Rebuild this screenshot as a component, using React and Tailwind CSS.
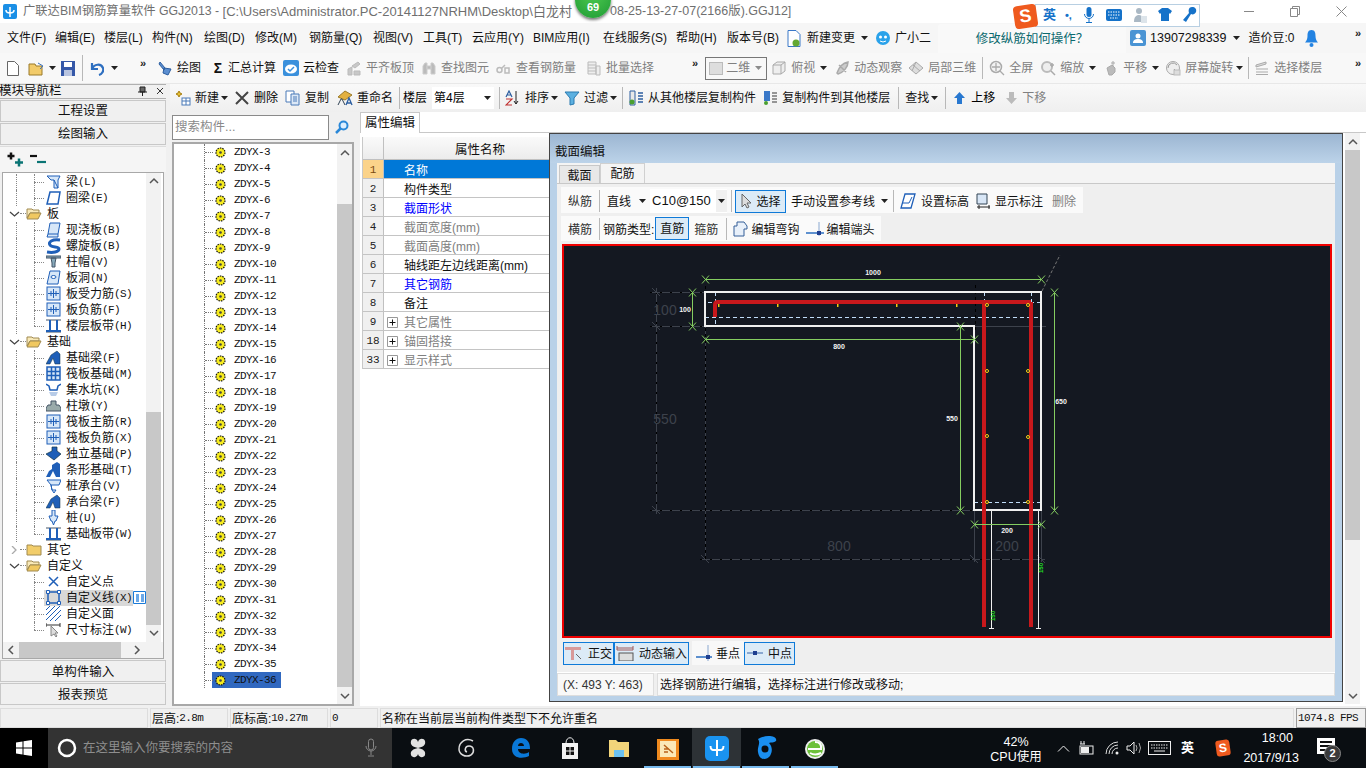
const sans = "[font-family:'Liberation_Sans','Noto_Sans_CJK_SC',sans-serif]";
const mono = "text-[11px] tracking-[-0.6px] [font-family:'Liberation_Mono',monospace]";

const Svg = ({ w = 16, h = 16, children, className = "" }) => (
  <svg width={w} height={h} viewBox={`0 0 ${w} ${h}`} className={`shrink-0 ${className}`}>
    {children}
  </svg>
);

const Caret = ({ className = "" }) => (
  <svg width="7" height="4" viewBox="0 0 7 4" className={`shrink-0 ${className}`}>
    <path d="M0 0h7L3.500 4z" fill="#222" />
  </svg>
);

const Sep = ({ h = "h-[22px]", className = "" }) => <div className={`w-px ${h} bg-[#b8b8b8] shrink-0 ${className}`} />;

const More = ({ className = "" }) => (
  <span className={`text-[11px] font-bold leading-none text-[#222] ${className}`}>»</span>
);

// toolbar icons, all gray ones share one look
const GrayIcon = ({ kind }) => (
  <Svg>
    {kind === "cube" && <path d="M2 5l4-3h8v9l-4 3H2zM2 5h8v9M10 5l4-3" fill="#eee" stroke="#aaa" />}
    {kind === "orbit" && <path d="M3 13C5 7 9 3 14 2c0 5-4 10-10 12zM5 5l7 7" fill="#ccc" stroke="#aaa" strokeWidth="1.500" />}
    {kind === "local" && <path d="M1 8l7-6 7 6-7 6zM5 5l7 6M8 2l-4 9" fill="#ddd" stroke="#aaa" />}
    {kind === "zoomall" && <><circle cx="7" cy="7" r="5.500" fill="#f2f2f2" stroke="#aaa" strokeWidth="1.500" /><path d="M7 3v8M3 7h8M11 11l4 4" stroke="#aaa" strokeWidth="1.300" /></>}
    {kind === "zoom" && <><circle cx="7" cy="7" r="5" fill="#eee" stroke="#bbb" strokeWidth="2" /><path d="M11 11l4 4M12 3v4M10 5h4" stroke="#aaa" strokeWidth="1.500" /></>}
    {kind === "pan" && <path d="M4 8l5-3 3 3v4l-3 3H6zM10 1v5M8 3h4" fill="#bbb" stroke="#aaa" />}
    {kind === "rotate" && <><circle cx="8" cy="8" r="6.500" fill="#eee" stroke="#aaa" /><path d="M3 8a5 5 0 0 1 9-3M9 9l3 3" stroke="#999" fill="none" /><rect x="9" y="10" width="6" height="5" fill="#ddd" stroke="#bbb" /></>}
    {kind === "floors" && <path d="M2 5l10-3v2L2 7zM2 9h12M2 12h12M2 14.500h12" fill="#ddd" stroke="#aaa" />}
    {kind === "flat" && <path d="M2 15V9l4-2v8zM6 6l6-4 2 2-5 4zM8 15v-4h6v4z" fill="#c8c8c8" stroke="#bbb" />}
    {kind === "binoc" && <path d="M2 14V6l2-3h2v11zM10 14V3h2l2 3v8zM6 6h4v3H6z" fill="#bbb" stroke="#ccc" />}
    {kind === "link" && <path d="M1 10a2.500 2.500 0 0 1 5 0 2.500 2.500 0 0 1-5 0zM9 8h4v5H9zM6 8l3-3" fill="none" stroke="#bbb" strokeWidth="1.500" />}
    {kind === "batch" && <path d="M2 2h8v12H2zM2 5h8M2 8h8M2 11h8M10 6h4v9h-4z" fill="#eee" stroke="#bbb" />}
  </Svg>
);

const Tool = ({ icon, label, gray, caret, caretGap = "ml-[5px]", className = "" }) => (
  <div className={`flex items-center shrink-0 ${className}`}>
    {icon}
    <span className={`${icon ? "ml-[4px]" : ""} whitespace-nowrap ${gray ? "text-[#808080]" : "text-[#111]"}`}>{label}</span>
    {caret && <Caret className={caretGap} />}
  </div>
);

const menus = [
  ["文件(F)", "w-[48px]"],
  ["编辑(E)", "w-[49px]"],
  ["楼层(L)", "w-[48px]"],
  ["构件(N)", "w-[52px]"],
  ["绘图(D)", "w-[51px]"],
  ["修改(M)", "w-[54px]"],
  ["钢筋量(Q)", "w-[64px]"],
  ["视图(V)", "w-[50px]"],
  ["工具(T)", "w-[49px]"],
  ["云应用(Y)", "w-[61px]"],
  ["BIM应用(I)", "w-[70px]"],
  ["在线服务(S)", "w-[73px]"],
  ["帮助(H)", "w-[51px]"],
  ["版本号(B)", "w-[60px]"],
];

const TitleBar = () => (
  <div className="h-[23px] bg-white flex items-center relative shrink-0">
    <div className="ml-[3px] w-[14px] h-[15px] rounded-[2px] bg-[#1a8fe6] flex items-center justify-center">
      <Svg w={10} h={10}><path d="M5 0v10M1 3c0 3 2 3 4 3s4 0 4-3" stroke="#fff" strokeWidth="1.500" fill="none" /></Svg>
    </div>
    <span className="ml-[6px] text-[#6f6f6f] text-[12.300px] whitespace-nowrap">广联达BIM钢筋算量软件 GGJ2013 -&nbsp;</span>
    <span className="text-[#6f6f6f] text-[13px] whitespace-nowrap w-[360px] overflow-hidden">[C:\Users\Administrator.PC-20141127NRHM\Desktop\白龙村</span>
    <span className="absolute left-[610px] text-[#6f6f6f] text-[12.500px] whitespace-nowrap">08-25-13-27-07(2166版).GGJ12]</span>
    <div className="ml-auto flex items-center mr-[19px] gap-[36px]">
      <div className="w-[10px] h-px bg-[#888]" />
      <Svg w={10} h={11}><path d="M.5 2.500h7v8h-7zM2.500 2.500v-2h7v8h-2" fill="none" stroke="#888" /></Svg>
      <Svg w={11} h={11}><path d="M.5.5l10 10M10.500.5l-10 10" stroke="#888" /></Svg>
    </div>
    {/* floating score badge */}
    <div className="absolute left-[575px] top-[-18px] w-[36px] h-[36px] rounded-full bg-[radial-gradient(circle_at_50%_35%,#4cc94f,#1f9a35)] shadow-[0_2px_3px_#7a7a7a] flex items-end justify-center pb-[3px] text-white text-[11px] font-bold">69</div>
  </div>
);

const SogouBar = () => (
  <div className="absolute left-[1014px] top-[3px] h-[24px] w-[186px] flex items-center">
    <div className="w-[23px] h-[23px] rounded-[4px] bg-[#ef5a1e] rotate-[-8deg] flex items-center justify-center text-white font-bold text-[18px] z-10 mt-[2px]">S</div>
    <div className="flex-1 h-[23px] -ml-[2px] bg-white border border-[#b8cfe2] flex items-center pl-[7px] gap-[11px] text-[#1572c9]">
      <span className="font-bold text-[13px]">英</span>
      <span className="font-bold text-[11px] -ml-[2px]">•,</span>
      <Svg w={12} h={18}><path d="M6 1a2.500 2.500 0 0 1 2.500 2.500v5a2.500 2.500 0 0 1-5 0v-5A2.500 2.500 0 0 1 6 1z" fill="#1572c9" /><path d="M1.500 8a4.500 4.500 0 0 0 9 0M6 13v3M3 16.500h6" stroke="#1572c9" fill="none" /></Svg>
      <Svg w={16} h={12}><rect width="16" height="12" rx="2" fill="#1572c9" /><path d="M2 3h12M2 6h12M4 9h8" stroke="#fff" strokeDasharray="1.500 1" /></Svg>
      <Svg w={14} h={16}><circle cx="6" cy="4" r="3" fill="#aab8c4" /><path d="M1 15c0-5 2-7 5-7 2 0 3 1 3 2v5z" fill="#aab8c4" /><rect x="8" y="9" width="6" height="7" fill="#dce4ea" /></Svg>
      <Svg w={14} h={14}><path d="M4 0h6l4 3-2 3-1-1v8H3V5L2 6 0 3z" fill="#1572c9" /></Svg>
      <Svg w={14} h={16}><path d="M9 0c3 0 5 2 4 5-1 2-3 3-5 2l-5 8-3-2 6-7C5 3 6 0 9 0z" fill="#1572c9" /></Svg>
    </div>
  </div>
);

const MenuBar = () => (
  <div className="h-[30px] bg-[#f6f6f6] flex items-center shrink-0 text-[12px] text-[#111]">
    <div className="flex items-center pl-[7px]">
      {menus.map(([m, w]) => (
        <span key={m} className={`whitespace-nowrap ${w}`}>{m}</span>
      ))}
    </div>
    <div className="flex items-center">
      <Svg w={14} h={17}><path d="M1 .5h8l4 4v12H1z" fill="#fff" stroke="#3a78c8" /><circle cx="9" cy="13" r="3.500" fill="#63a832" /></Svg>
      <span className="ml-[6px]">新建变更</span>
      <Caret className="ml-[6px]" />
    </div>
    <div className="flex items-center ml-[7px]">
      <Svg w={16} h={16}><circle cx="8" cy="8" r="7" fill="#2aa2ea" /><circle cx="5.500" cy="7" r="1.500" fill="#fff" /><circle cx="10.500" cy="7" r="1.500" fill="#fff" /><path d="M5 11q3 2 6 0" stroke="#fff" fill="none" /></Svg>
      <span className="ml-[4px]">广小二</span>
    </div>
    <div className="ml-[7px] h-[30px] w-[188px] mt-[2px] bg-[#f9f9f9] rounded-t-[3px] flex items-center justify-center text-[#0d6a6f] text-[12.500px]">修改纵筋如何操作？</div>
    <div className="w-[16px] h-[16px] ml-[4px] rounded-[2px] bg-[#4a94d4] flex items-center justify-center">
      <Svg w={10} h={10}><circle cx="5" cy="3" r="2.500" fill="#fff" /><path d="M0 10c0-3 2-4 5-4s5 1 5 4z" fill="#fff" /></Svg>
    </div>
    <span className="ml-[4px] text-[12.500px]">13907298339</span>
    <Caret className="ml-[6px]" />
    <span className="ml-[9px] whitespace-nowrap">造价豆:0</span>
    <Svg w={13} h={17} className="ml-[10px]"><path d="M6.500 0C10 0 10.500 3 10.500 6c0 3 1 5 2.500 6.500H0C1.500 11 2.500 9 2.500 6c0-3 .5-6 4-6z" fill="#2383e2" /><circle cx="6.500" cy="15" r="2" fill="#2383e2" /></Svg>
    <More className="ml-auto mr-[5px] mb-[10px]" />
  </div>
);

const MainToolbar = () => (
  <div className="h-[31px] bg-[#f8f8f8] flex items-center shrink-0 text-[12px] border-b border-[#e8e8e8]">
    <div className="flex items-center pl-[7px] w-[150px]">
      <Svg w={12} h={15}><path d="M.5.5h7l4 4v10H.5z" fill="#fff" stroke="#666" /></Svg>
      <Svg w={18} h={15} className="ml-[9px]"><path d="M1 3h6l1 2h6v9H1z" fill="#f2cb6a" stroke="#9a7a2a" /><path d="M10 2l5 3-3 3" stroke="#3b73c4" fill="none" /></Svg>
      <Caret className="ml-[3px]" />
      <Svg w={14} h={15} className="ml-[5px]"><rect width="14" height="15" fill="#3558a8" /><rect x="3" y="1" width="8" height="5" fill="#fff" /><rect x="3" y="9" width="8" height="6" fill="#b8c4e0" /></Svg>
      <Sep h="h-[26px]" className="ml-[7px]" />
      <Svg w={14} h={15} className="ml-[7px]"><path d="M2 2v6h6M2 8c2-5 9-6 11-1 1 3-1 6-4 7" stroke="#2e6fc0" strokeWidth="2.200" fill="none" /></Svg>
      <Caret className="ml-[7px]" />
      <More className="ml-[22px] mb-[10px]" />
    </div>
    <div className="flex items-center ml-[7px]">
      <Tool icon={<Svg><path d="M3 2l5 6-1 2-5-6zM7 8l7 1-3 6-5-2z" fill="#5b8ed0" stroke="#2c5ea0" /></Svg>} label="绘图" />
      <Tool icon={<span className="w-[12px] text-center text-[14px] font-bold text-[#111] leading-none">Σ</span>} label="汇总计算" className="ml-[11px]" />
      <Tool icon={<Svg><rect width="16" height="16" rx="2" fill="#3a90dc" /><ellipse cx="8" cy="9" rx="6" ry="4.500" fill="#fff" /><path d="M5 9l2 2 4-4" stroke="#3a90dc" strokeWidth="1.500" fill="none" /></Svg>} label="云检查" className="ml-[7px]" />
      <Tool gray icon={<GrayIcon kind="flat" />} label="平齐板顶" className="ml-[7px]" />
      <Tool gray icon={<GrayIcon kind="binoc" />} label="查找图元" className="ml-[7px]" />
      <Tool gray icon={<GrayIcon kind="link" />} label="查看钢筋量" className="ml-[7px]" />
      <Tool gray icon={<GrayIcon kind="batch" />} label="批量选择" className="ml-[10px]" />
    </div>
    <More className="ml-[38px] mb-[10px]" />
    <div className="ml-[7px] w-[62px] h-[23px] border border-[#777] flex items-center text-[#808080] pl-[3px]">
      <div className="w-[14px] h-[13px] bg-[#ddd] border border-[#bbb]" />
      <span className="ml-[3px]">二维</span>
      <Caret className="ml-[5px] opacity-50" />
    </div>
    <div className="flex items-center ml-[4px]">
      <Tool gray caret icon={<GrayIcon kind="cube" />} label="俯视" />
      <Tool gray icon={<GrayIcon kind="orbit" />} label="动态观察" className="ml-[7px]" />
      <Tool gray icon={<GrayIcon kind="local" />} label="局部三维" className="ml-[6px]" />
      <Sep className="ml-[6px]" />
      <Tool gray icon={<GrayIcon kind="zoomall" />} label="全屏" className="ml-[6px]" />
      <Tool gray caret icon={<GrayIcon kind="zoom" />} label="缩放" className="ml-[7px]" />
      <Tool gray caret icon={<GrayIcon kind="pan" />} label="平移" className="ml-[7px]" />
      <Tool gray caret caretGap="ml-[3px]" icon={<GrayIcon kind="rotate" />} label="屏幕旋转" className="ml-[6px]" />
      <Sep className="ml-[5px]" />
      <Tool gray icon={<GrayIcon kind="floors" />} label="选择楼层" className="ml-[5px]" />
    </div>
    <More className="ml-auto mr-[5px] mb-[10px]" />
  </div>
);

const SecondToolbar = () => (
  <div className="h-[28px] bg-[linear-gradient(#f9f9f9,#efefef)] flex items-center text-[12px] pl-[5px] shrink-0">
    <Tool caret caretGap="ml-[2px]" icon={<Svg><path d="M4 1l1 2 2 1-2 1-1 2-1-2-2-1 2-1z" fill="#e8c030" stroke="#a88010" /><rect x="7" y="8" width="8" height="7" fill="#fff" stroke="#4a7ab8" /><path d="M7 11h8M11 8v7" stroke="#4a7ab8" /></Svg>} label="新建" />
    <Svg w={14} h={14} className="ml-[7px]"><path d="M1 1l12 12M13 1L1 13" stroke="#444" strokeWidth="2" /></Svg>
    <span className="ml-[5px]">删除</span>
    <Tool className="ml-[7px]" icon={<Svg><path d="M1 1h8v11H1z" fill="#fff" stroke="#4a7ab8" /><path d="M6 4h8v11H6z" fill="#dce8f6" stroke="#4a7ab8" /><path d="M8 7h4M8 9h4M8 11h4" stroke="#4a7ab8" /></Svg>} label="复制" />
    <Tool className="ml-[8px]" icon={<Svg><path d="M1 7l7-6 7 4-7 5z" fill="#e2b040" stroke="#9a7a2a" /><path d="M1 15l3-6h1l3 6" stroke="#345" fill="none" /><path d="M9 15l3-7 3 7M10 13h4" stroke="#2c5ea0" strokeWidth="1.300" fill="none" /></Svg>} label="重命名" />
    <Sep className="ml-[6px]" />
    <span className="ml-[3px]">楼层</span>
    <div className="ml-[5px] w-[62px] h-[22px] bg-white flex items-center pl-[2px]">
      <span>第4层</span>
      <Caret className="ml-auto mr-[3px]" />
    </div>
    <Sep className="ml-[5px]" />
    <Tool caret caretGap="ml-[2px]" className="ml-[5px]" icon={<Svg w={16} h={16}><path d="M1 7l3-6 3 6M2 5h4" stroke="#2c5ea0" strokeWidth="1.200" fill="none" /><path d="M1 9h6L1 15h6" stroke="#c03030" strokeWidth="1.200" fill="none" /><path d="M11 1v13M9 11l2 3 2-3" stroke="#222" fill="none" /></Svg>} label="排序" />
    <Tool caret caretGap="ml-[2px]" className="ml-[6px]" icon={<Svg><path d="M1 2h14L10 8v6l-4 1V8z" fill="#5cb0e0" stroke="#2a7ab0" /></Svg>} label="过滤" />
    <Sep className="ml-[5px]" />
    <Tool className="ml-[5px]" icon={<Svg><path d="M2 1h5v14H2z" fill="#e8e8e8" stroke="#2c5ea0" /><path d="M10 3h5M10 6h5M10 9h5M10 12h5" stroke="#2c5ea0" strokeWidth="1.500" /><circle cx="4" cy="12" r="2.500" fill="#4aa030" /></Svg>} label="从其他楼层复制构件" />
    <Tool className="ml-[6px]" icon={<Svg><path d="M2 1h6v10H2z" fill="#3a78c8" /><path d="M10 3h5M10 6h5M10 9h5M10 12h5" stroke="#777" strokeWidth="1.500" /><circle cx="4" cy="13" r="2" fill="#4aa030" /></Svg>} label="复制构件到其他楼层" />
    <Sep className="ml-[8px]" />
    <Tool caret caretGap="ml-[2px]" className="ml-[6px]" label="查找" />
    <Sep className="ml-[7px]" />
    <Svg w={11} h={12} className="ml-[8px]"><path d="M5.500 0L11 6H8v6H3V6H0z" fill="#2878d0" /></Svg>
    <span className="ml-[6px]">上移</span>
    <Svg w={11} h={12} className="ml-[11px]"><path d="M5.500 12L11 6H8V0H3v6H0z" fill="#bbb" /></Svg>
    <span className="ml-[5px] text-[#808080]">下移</span>
  </div>
);

const UpChevron = () => <Svg w={12} h={8}><path d="M2 6l4-4 4 4" stroke="#555" strokeWidth="1.500" fill="none" /></Svg>;
const DownChevron = () => <Svg w={12} h={8}><path d="M2 2l4 4 4-4" stroke="#555" strokeWidth="1.500" fill="none" /></Svg>;

const NavButton = ({ label }) => (
  <div className="h-[22px] mb-px pt-[2px] bg-[#f0f0f0] border border-[#c8c8c8] flex items-center justify-center text-[12.500px] text-[#111] shrink-0">{label}</div>
);

// the small blue tree icons
const treeIcon = (kind) => {
  const c = "#1f5fb8";
  const f = "#d7e7f8";
  switch (kind) {
    case "beam": return <path d="M1 2h13l-2 4v8H8V6H5zM8 6l4 8" fill={f} stroke={c} />;
    case "slab": return <path d="M4 2h10l-2 12H1z" fill="#fff" stroke={c} strokeWidth="1.500" />;
    case "solid": return <path d="M4 1h10l-2 11H2zM2 12l-1 3h11l0-3" fill={f} stroke={c} />;
    case "spiral": return <path d="M14 2C6 1 2 4 4 7s9 1 9 4-6 4-12 3" fill="none" stroke={c} strokeWidth="3" />;
    case "cap": return <path d="M0 2h15v2H0zM5 4h5l-1 5v4H6V9z" fill="#8ab" stroke="#456" />;
    case "hole": return <><path d="M4 1h10l-2 13H1z" fill={f} stroke={c} /><ellipse cx="7.500" cy="7" rx="2.500" ry="1.500" fill="#fff" stroke={c} /></>;
    case "rebar": return <><rect x="1" y="1" width="13" height="13" fill={f} stroke={c} /><path d="M7.500 3v9M2 7.500h11" stroke={c} /><path d="M5 5v5M10 5v5" stroke={c} /></>;
    case "band": return <><path d="M0 2h15M0 14h15" stroke="#456" /><rect x="3" y="2" width="2" height="12" fill={c} /><rect x="10" y="2" width="2" height="12" fill={c} /><path d="M0 13h15" stroke={c} strokeWidth="2" /></>;
    case "fbeam": return <path d="M0 14l5-9 6-4 3 3v10H9l-2-6-3 6z" fill={c} stroke="#134" strokeWidth=".5" />;
    case "raft": return <><rect x="1" y="1" width="13" height="13" fill={f} stroke={c} strokeWidth="1.500" /><path d="M1 5.500h13M1 9.500h13M5.500 1v13M9.500 1v13" stroke={c} strokeWidth="1.500" /></>;
    case "pit": return <><path d="M0 2l3 2 1 4 7 0 1-4 3-2" fill="none" stroke={c} strokeWidth="1.500" /><path d="M3 10h9l-2 4H5z" fill="#b8cce8" /></>;
    case "pier": return <path d="M5 3h5v4h3l2 3v3H0v-3l2-3h3z" fill="#9aa" stroke="#456" />;
    case "iso": return <path d="M0 8l6-3V1h5v4l4 3-7 6z" fill={c} stroke="#134" strokeWidth=".7" />;
    case "strip": return <path d="M0 15l3-6 3-2V3l5-3 3 2v13H10L7 9l-3 6z" fill={c} />;
    case "pcap": return <path d="M1 2h14l-2 5H5L6 12h4l-2 3-2-3-1-5z" fill={f} stroke={c} />;
    case "pile": return <path d="M6 0h3v6h3l-2 5H9l-1.500 4L6 11H5L3 6h3z" fill={f} stroke={c} />;
    case "cross": return <path d="M3 3l9 9M12 3l-9 9" stroke={c} strokeWidth="1.500" />;
    case "line": return <><rect x="2" y="2" width="11" height="11" fill="none" stroke={c} strokeWidth="1.500" /><path d="M.5.500h3v3h-3zM11.500.5h3v3h-3zM.5 11.500h3v3h-3zM11.500 11.500h3v3h-3z" fill="#fff" stroke={c} /></>;
    case "hatch": return <path d="M0 4l4-4M0 9l9-9M0 14l14-14M4 15l11-11M9 15l6-6" stroke={c} />;
    case "dim": return <><path d="M0 1v4M14 1v4M0 3h14" stroke="#333" /><path d="M5 4v10l3-2 2 3 1-1-2-3h3z" fill="#ddd" stroke="#888" /></>;
    default: return null;
  }
};

const TreeIcon = ({ kind }) => <Svg w={15} h={16} className="ml-[2px]">{treeIcon(kind)}</Svg>;

const Folder = ({ open }) => (
  <Svg w={16} h={13}>
    {open ? (
      <><path d="M1 2h5l1 1h6v3H4L1 11z" fill="#f8e9b8" stroke="#a08a50" /><path d="M4 6h11l-3 6H1z" fill="#f0c860" stroke="#a08a50" /></>
    ) : (
      <path d="M1 2h5l1 1h8v9H1z" fill="#f2cd6a" stroke="#a08a50" />
    )}
  </Svg>
);

const navTree = [
  { label: "梁", key: "(L)", icon: "beam" },
  { label: "圈梁", key: "(E)", icon: "slab" },
  { group: "板", open: true },
  { label: "现浇板", key: "(B)", icon: "solid" },
  { label: "螺旋板", key: "(B)", icon: "spiral" },
  { label: "柱帽", key: "(V)", icon: "cap" },
  { label: "板洞", key: "(N)", icon: "hole" },
  { label: "板受力筋", key: "(S)", icon: "rebar" },
  { label: "板负筋", key: "(F)", icon: "rebar" },
  { label: "楼层板带", key: "(H)", icon: "band", last: true },
  { group: "基础", open: true },
  { label: "基础梁", key: "(F)", icon: "fbeam" },
  { label: "筏板基础", key: "(M)", icon: "raft" },
  { label: "集水坑", key: "(K)", icon: "pit" },
  { label: "柱墩", key: "(Y)", icon: "pier" },
  { label: "筏板主筋", key: "(R)", icon: "rebar" },
  { label: "筏板负筋", key: "(X)", icon: "rebar" },
  { label: "独立基础", key: "(P)", icon: "iso" },
  { label: "条形基础", key: "(T)", icon: "strip" },
  { label: "桩承台", key: "(V)", icon: "pcap" },
  { label: "承台梁", key: "(F)", icon: "fbeam" },
  { label: "桩", key: "(U)", icon: "pile" },
  { label: "基础板带", key: "(W)", icon: "band", last: true },
  { group: "其它" },
  { group: "自定义", open: true },
  { label: "自定义点", icon: "cross", noRoot: true },
  { label: "自定义线", key: "(X)", icon: "line", selected: true, noRoot: true },
  { label: "自定义面", icon: "hatch", noRoot: true },
  { label: "尺寸标注", key: "(W)", icon: "dim", last: true, noRoot: true },
];

const NavRow = ({ item }) => {
  if (item.group) {
    return (
      <div className="h-[16px] flex items-center shrink-0">
        <Svg w={11} h={8} className="ml-[6px]">
          {item.open ? <path d="M1 2l4.500 4L10 2" stroke="#444" strokeWidth="1.300" fill="none" /> : <path d="M3 0l4 4-4 4" stroke="#aaa" strokeWidth="1.300" fill="none" />}
        </Svg>
        <div className="w-[6px] border-t border-dotted border-[#888]" />
        <Folder open={item.open} />
        <span className="ml-[5px] pt-px text-[#111]">{item.group}</span>
      </div>
    );
  }
  return (
    <div className="h-[16px] flex items-center shrink-0">
      <div className="w-[15px] h-[16px] shrink-0 flex">
        <div className={`ml-[13px] h-[16px] ${item.noRoot ? "" : "border-l border-dotted border-[#888]"}`} />
      </div>
      <div className="w-[26px] h-[16px] shrink-0 flex relative">
        <div className={`ml-[16px] ${item.last ? "h-[8px]" : "h-[16px]"} w-[10px] border-l border-dotted border-[#888]`} />
        <div className="absolute left-[16px] top-[8px] w-[10px] border-t border-dotted border-[#888]" />
      </div>
      <div className={`flex items-center h-[16px] pr-[1px] ${item.selected ? "bg-[#d8d8d8]" : ""}`}>
        <TreeIcon kind={item.icon} />
        <span className="ml-[5px] pt-px text-[#111] whitespace-nowrap">{item.label}</span>
        {item.key && <span className={`pt-px ${mono} text-[#111]`}>{item.key}</span>}
      </div>
      {item.selected && (
        <Svg w={13} h={13} className="shrink-0">
          <path d="M.5.5h12v12H.5z" fill="#fff" stroke="#1a7ad8" />
          <path d="M3 3h3v8H3zM8 3h3v8H8z" fill="#6aa8e8" />
        </Svg>
      )}
    </div>
  );
};

const NavPanel = () => (
  <div className="w-[166px] h-full flex flex-col text-[12px] shrink-0">
    <div className="h-[15px] mb-[1px] flex items-center border-y border-[#b0b0b0] bg-[#f0f0f0] text-[12.500px] text-[#111] leading-none">
      <span className="-ml-px">模块导航栏</span>
      <Svg w={9} h={10} className="ml-auto"><path d="M2 1h5v5H2zM0 6h9M4.500 6v4" stroke="#222" fill="#666" /></Svg>
      <Svg w={8} h={8} className="ml-[9px] mr-[2px]"><path d="M1 1l6 6M7 1L1 7" stroke="#333" /></Svg>
    </div>
    <NavButton label="工程设置" />
    <NavButton label="绘图输入" />
    <div className="h-[26px] bg-[#f5f5f5] border-t border-[#ddd] flex items-center pl-[7px] shrink-0">
      <Svg w={17} h={15}><path d="M4 .5v7M.5 4h7" stroke="#111" strokeWidth="2.500" /><path d="M12 6.500v8M8 10.500h8" stroke="#0a7474" strokeWidth="2.500" /></Svg>
      <Svg w={17} h={10} className="ml-[6px]"><path d="M0 2h7" stroke="#111" strokeWidth="2.200" /><path d="M7 8h9" stroke="#0a7474" strokeWidth="2.200" /></Svg>
    </div>
    <div className="mx-[2px] h-[487px] border border-[#a8a8a8] bg-white flex flex-col shrink-0">
      <div className="flex-1 flex min-h-0">
        <div className="w-[143px] overflow-hidden flex flex-col pt-px">
          {navTree.map((item, i) => <NavRow key={i} item={item} />)}
        </div>
        <div className="w-[15px] bg-[#f2f2f2] flex flex-col items-center">
          <div className="h-[17px] flex items-center"><UpChevron /></div>
          <div className="h-[222px]" />
          <div className="w-[15px] flex-1 bg-[#c8c8c8]" />
          <div className="h-[17px] flex items-center"><DownChevron /></div>
        </div>
      </div>
      <div className="h-[16px] bg-[#f2f2f2] flex items-center shrink-0">
        <Svg w={16} h={12} className="shrink-0"><path d="M10 2L6 6l4 4" stroke="#555" strokeWidth="1.500" fill="none" /></Svg>
        <div className="w-[102px] h-[16px] bg-[#c8c8c8]" />
        <Svg w={16} h={12} className="ml-[8px] shrink-0"><path d="M6 2l4 4-4 4" stroke="#555" strokeWidth="1.500" fill="none" /></Svg>
      </div>
    </div>
    <div className="h-[2px]" />
    <NavButton label="单构件输入" />
    <NavButton label="报表预览" />
  </div>
);

const Gear = () => (
  <Svg w={11} h={11} className="shrink-0">
    <circle cx="5.500" cy="5.500" r="4.500" fill="#f7ec1e" stroke="#111" strokeWidth="1.200" strokeDasharray="1.500 1" />
    <circle cx="5.500" cy="5.500" r="1.300" fill="#444" />
  </Svg>
);

const componentIds = Array.from({ length: 34 }, (_, i) => i + 3);

const ComponentTree = () => (
  <div className="w-[190px] shrink-0 h-full flex flex-col pl-[2px] pr-[6px]">
    <div className="h-[30px] flex items-center shrink-0">
      <div className="w-[157px] h-[25px] bg-white border border-[#8a8a8a] flex items-center pl-[2px] text-[12.500px] text-[#8a8a8a]">搜索构件...</div>
      <Svg w={14} h={14} className="ml-[6px]"><circle cx="8.500" cy="5.500" r="4" fill="#dcefff" stroke="#2a88d8" strokeWidth="2" /><path d="M5.500 8.500L1 13" stroke="#2a88d8" strokeWidth="2.500" /></Svg>
    </div>
    <div className="h-[564px] border-2 border-[#a8a8a8] bg-white flex overflow-hidden">
      <div className="w-[164px] flex flex-col">
        {componentIds.map((n) => (
          <div key={n} className="h-[16px] flex items-center shrink-0">
            <div className="ml-[30px] relative w-[8px] h-[16px] border-l border-dotted border-[#777]">
              <div className="absolute left-0 top-[8px] w-[8px] border-t border-dotted border-[#777]" />
            </div>
            <div className={`flex items-center h-[16px] pl-[3px] w-[69px] ${n === 36 ? "bg-[#3068c0]" : ""}`}>
              <Gear />
              <span className={`ml-[8px] ${mono} text-[#111]`}>ZDYX-{n}</span>
            </div>
          </div>
        ))}
      </div>
      <div className="w-[15px] bg-[#f2f2f2] flex flex-col items-center shrink-0">
        <div className="h-[17px] flex items-center"><UpChevron /></div>
        <div className="h-[43px]" />
        <div className="w-[15px] flex-1 bg-[#c8c8c8]" />
        <div className="h-[17px] flex items-center"><DownChevron /></div>
      </div>
    </div>
  </div>
);

const propRows = [
  { n: 1, label: "名称", selected: true },
  { n: 2, label: "构件类型" },
  { n: 3, label: "截面形状", color: "text-[#0000ff]" },
  { n: 4, label: "截面宽度(mm)", color: "text-[#808080]" },
  { n: 5, label: "截面高度(mm)", color: "text-[#808080]" },
  { n: 6, label: "轴线距左边线距离(mm)" },
  { n: 7, label: "其它钢筋", color: "text-[#0000ff]" },
  { n: 8, label: "备注" },
  { n: 9, label: "其它属性", plus: true, color: "text-[#808080]" },
  { n: 18, label: "锚固搭接", plus: true, color: "text-[#808080]" },
  { n: 33, label: "显示样式", plus: true, color: "text-[#808080]" },
];

const PropGrid = () => (
  <div className="flex-1 relative min-w-0 h-full bg-white text-[12px]">
    <div className="h-[21px] border-b border-[#c8c8c8] flex">
      <div className="w-[60px] h-[21px] pt-px bg-white border border-b-0 border-[#c8c8c8] flex items-center justify-center text-[12.500px] text-[#111]">属性编辑</div>
    </div>
    <div className="ml-[2px] mt-[4px] w-[190px] border-l border-[#c8c8c8]">
      <div className="h-[23px] flex border-b border-[#c0c0c0] bg-[linear-gradient(#fafafa,#ececec)]">
        <div className="w-[21px] border-r border-[#c0c0c0]" />
        <div className="flex-1 pl-[71px] pt-[4px] flex items-center text-[12.500px] text-[#111]">属性名称</div>
      </div>
      {propRows.map((r) => (
        <div key={r.n} className="h-[19px] flex border-b border-[#c4c4c4]">
          <div className={`w-[21px] pt-[2px] border-r border-[#c0c0c0] flex items-center justify-center text-[11px] [font-family:'Liberation_Mono',monospace] ${r.selected ? "bg-[#fbd38a] text-[#7a4a10]" : "bg-[#f0f0f0] text-[#222]"}`}>{r.n}</div>
          <div className={`flex-1 flex items-center pt-[3px] ${r.selected ? "bg-[#0078d7] text-white" : r.color || "text-[#111]"} ${r.plus ? "pl-[3px]" : "pl-[20px]"}`}>
            {r.plus && (
              <Svg w={11} h={11} className="mr-[6px]"><path d="M.5.5h10v10H.5z" fill="#fff" stroke="#999" /><path d="M2.500 5.500h6M5.500 2.500v6" stroke="#111" /></Svg>
            )}
            <span className="whitespace-nowrap">{r.label}</span>
          </div>
        </div>
      ))}
    </div>
    <div className="absolute right-[6px] top-[21px] bottom-[2px] w-[15px] bg-[#f2f2f2] flex flex-col items-center">
      <div className="h-[17px] flex items-center"><UpChevron /></div>
      <div className="w-[15px] h-[390px] bg-[#c8c8c8]" />
      <div className="flex-1" />
      <div className="h-[17px] flex items-center"><DownChevron /></div>
    </div>
    <SectionDialog />
  </div>
);

const DlgBtn = ({ icon, label, active, w }) => (
  <div className={`h-[23px] flex items-center justify-center gap-[5px] shrink-0 ${w} ${active ? "border-[1.500px] border-[#0f7ad8] bg-[#dcebf7]" : ""}`}>
    {icon}
    <span className="whitespace-nowrap pt-px">{label}</span>
  </div>
);

const Dim = ({ x1, y1, x2, y2, label, lx, ly }) => {
  const ticks = [[x1, y1], [x2, y2]];
  return (
    <g>
      <line x1={x1 + 0.5} y1={y1 + 0.5} x2={x2 + 0.5} y2={y2 + 0.5} stroke="#84cc60" />
      {ticks.map(([x, y], i) => (
        <path key={i} d={`M${x - 3} ${y + 4.500}L${x + 4} ${y - 3.500}M${x - 3} ${y - 3.500}L${x + 4} ${y + 4.500}`} stroke="#84cc60" />
      ))}
      <text x={lx} y={ly} textAnchor="middle" fontSize="7" fontWeight="700" fill="#f4f4f4" fontFamily="Liberation Sans">{label}</text>
    </g>
  );
};

const SectionCanvas = () => {
  const dots = [[987, 305], [1028, 305], [987, 371], [1028, 371], [987, 436], [1028, 437], [987, 502], [1028, 502]];
  const ticks = [718, 777, 837, 896, 956];
  const gray = "#3d424c";
  return (
    <svg width="766" height="390" viewBox="564 246 766 390" className="block">
      <g stroke={gray} fill="none" shapeRendering="crispEdges">
        <path d="M656 288V514M650 292H705M650 326H1046M650 510H974M705 326V560M974 510V562M1041 510V562M700 559H1045" />
        <path d="M705 286V560M975 285V330" strokeDasharray="3 3" stroke="#000" />
        <path d="M650 292H705M650 326H974M650 510H974M700 559H1045M656 292V510" strokeDasharray="2 8" stroke="#000" />
      </g>
      <g stroke={gray} fill="none">
        <path d="M652 288l8 8M652 322l8 8M652 506l8 8M701 555l8 8M970 555l8 8M1037 555l8 8" />
        <path d="M1042 291L1060 255" strokeDasharray="3 2" stroke="#777" />
      </g>
      <g fontFamily="Liberation Sans" fontSize="14" fill={gray} textAnchor="middle">
        <text x="665" y="315">100</text>
        <text x="665" y="424">550</text>
        <text x="839" y="551">800</text>
        <text x="1007" y="551">200</text>
      </g>
      <g stroke="#c0dcf8" strokeDasharray="4 3" fill="none" shapeRendering="crispEdges">
        <path d="M705 317H1041M715 292V326M984 292V305M1031 292V305M974 502H1041M708 302H1041" />
      </g>
      <path d="M705 292H1041V510H974V326H705Z" fill="none" stroke="#f0f0f0" strokeWidth="2" shapeRendering="crispEdges" />
      <path d="M991.500 510V628M1038 510V628" stroke="#f0f0f0" fill="none" shapeRendering="crispEdges" />
      <path d="M989 628h5M1036 628h5" stroke="#f0f0f0" shapeRendering="crispEdges" />
      <path d="M715 317V305Q715 302 718 302H1031M984 302V627M1031 302V627" stroke="#c8181c" strokeWidth="4" fill="none" />
      <g fill="#f2c811">
        {ticks.map((x) => <rect key={x} x={x} y="304" width="1.500" height="3" />)}
      </g>
      <g fill="none" stroke="#f7d117" strokeWidth="1">
        {dots.map(([x, y]) => <circle key={`${x}-${y}`} cx={x} cy={y} r="1.500" />)}
      </g>
      <Dim x1={705} y1={279} x2={1041} y2={279} label="1000" lx={873} ly={275} />
      <Dim x1={692} y1={292} x2={692} y2={326} label="100" lx={685} ly={312} />
      <Dim x1={705} y1={339} x2={974} y2={339} label="800" lx={839} ly={349} />
      <Dim x1={960} y1={326} x2={960} y2={510} label="550" lx={952} ly={421} />
      <Dim x1={1054} y1={292} x2={1054} y2={510} label="650" lx={1061} ly={404} />
      <Dim x1={974} y1={524} x2={1041} y2={524} label="200" lx={1007} ly={533} />
      <g fontFamily="Liberation Sans" fontSize="6" fontWeight="700" fill="#22e822">
        <text transform="translate(1043 573) rotate(-90)">150</text>
        <text transform="translate(995 621) rotate(-90)">150</text>
      </g>
    </svg>
  );
};

const SectionDialog = () => (
  <div className="absolute left-[189px] top-[21px] w-[794px] h-[569px] border border-[#444] bg-[#b9d1e8] flex flex-col text-[12px] text-[#111]">
    <div className="h-[29px] bg-[linear-gradient(#9cb6d2,#bcd3e9)] flex items-center pl-[5px] pt-[8px] text-[12.500px] shrink-0">截面编辑</div>
    <div className="mx-[7px] mb-[5px] flex-1 flex flex-col bg-[#efefef] min-h-0">
      <div className="h-[20px] flex items-end bg-[#f4f4f4] shrink-0 pl-[2px]">
        <div className="w-[41px] h-[18px] pt-[2px] bg-[#e8e8e8] border border-b-0 border-[#c8c8c8] flex items-center justify-center">截面</div>
        <div className="w-[45px] h-[20px] bg-[#f4f4f4] border border-b-0 border-[#d0d0d0] flex items-center justify-center">配筋</div>
      </div>
      <div className="border-t border-[#c8c8c8] h-[4px] shrink-0" />
      <div className="ml-[4px] pt-[2px] bg-[#fafafa] h-[26px] flex items-center shrink-0 w-[522px]">
        <span className="ml-[7px] pt-[2px] text-[#333]">纵筋</span>
        <Sep className="ml-[7px]" />
        <span className="ml-[7px] pt-[2px]">直线</span>
        <Caret className="ml-[8px]" />
        <div className="ml-[4px] w-[77px] h-[24px] bg-white flex items-center text-[13px] pl-[2px] [font-family:'Liberation_Sans',sans-serif]">
          C10@150
          <div className="ml-auto w-[11px] h-[22px] bg-[#f0f0f0] flex items-center justify-center"><Caret /></div>
        </div>
        <Sep className="ml-[4px] mr-[3px]" />
        <DlgBtn active w="w-[51px]" icon={<Svg w={11} h={16}><path d="M1 1v13l3-3 2 4 2-1-2-4h4z" fill="#ddd" stroke="#666" /></Svg>} label="选择" />
        <span className="ml-[5px] pt-[2px] whitespace-nowrap">手动设置参考线</span>
        <Caret className="ml-[6px]" />
        <Sep className="ml-[5px]" />
        <Svg className="ml-[6px]"><path d="M5 1h10l-4 14H1z" fill="#fff" stroke="#1f5fb8" strokeWidth="1.300" /><path d="M3 10h6l3-6" stroke="#1f5fb8" fill="none" /></Svg>
        <span className="ml-[5px] pt-[2px] whitespace-nowrap">设置标高</span>
        <Svg className="ml-[7px]"><path d="M1 1h10v10H1z" fill="#d8e6f6" stroke="#345" /><path d="M1 14h13M3 12v4M13 12v4" stroke="#222" /></Svg>
        <span className="ml-[3px] pt-[2px] whitespace-nowrap">显示标注</span>
        <span className="ml-[9px] pt-[2px] text-[#808080]">删除</span>
      </div>
      <div className="h-[3px] shrink-0" />
      <div className="ml-[4px] bg-[#fafafa] h-[25px] flex items-center shrink-0 w-[320px]">
        <span className="ml-[7px] pt-[2px] text-[#333]">横筋</span>
        <Sep className="ml-[7px]" />
        <span className="ml-[3px] pt-[2px] whitespace-nowrap">钢筋类型:</span>
        <DlgBtn active w="w-[34px] ml-px" label="直筋" />
        <span className="ml-[5px] pt-[2px] text-[#333]">箍筋</span>
        <Sep className="ml-[8px]" />
        <Svg className="ml-[6px]"><path d="M1 5h3V1h7l3 4v3h-3v7H1z" fill="#e8f0fa" stroke="#345f98" /></Svg>
        <span className="ml-[2px] pt-[2px] whitespace-nowrap">编辑弯钩</span>
        <Svg w={18} className="ml-[7px]"><path d="M0 12h18" stroke="#2a6ec0" strokeWidth="1.500" /><path d="M13 1v14" stroke="#8aa8d0" /><rect x="11" y="10" width="4" height="4" fill="#1f3f90" /></Svg>
        <span className="ml-[2px] pt-[2px] whitespace-nowrap">编辑端头</span>
      </div>
      <div className="mt-[3px] ml-[5px] w-[770px] h-[394px] border-2 border-[#f00000] bg-[#141821] shrink-0 overflow-hidden">
        <SectionCanvas />
      </div>
      <div className="ml-[6px] mt-[3px] h-[24px] flex items-center shrink-0">
        <DlgBtn active w="w-[51px]" icon={<Svg w={18} h={16}><path d="M0 2h16v3H9v10H6V5H0z" fill="#d89a9a" /><path d="M11 9l5 5" stroke="#666" /></Svg>} label="正交" />
        <DlgBtn active w="w-[75px]" icon={<Svg w={18} h={16}><path d="M1 1v4h16V1M1 3h16" stroke="#a05858" fill="none" /><rect x="3" y="8" width="14" height="8" fill="#ddd" stroke="#555" /></Svg>} label="动态输入" />
        <div className="flex items-center gap-[4px] ml-[3px] bg-[#f8f8f8] h-[24px] w-[52px] pl-[4px] shrink-0">
          <Svg><path d="M0 12h16" stroke="#2a6ec0" strokeWidth="1.500" /><path d="M12 0v16" stroke="#8aa8d0" /><rect x="10" y="10" width="4" height="4" fill="#1f3f90" /></Svg>
          <span className="pt-px">垂点</span>
        </div>
        <DlgBtn active w="w-[51px]" icon={<Svg><path d="M0 8h16" stroke="#8aa8d0" strokeWidth="2" /><rect x="6" y="6" width="4" height="4" fill="#1f3f90" /></Svg>} label="中点" />
      </div>
      <div className="flex-1 mt-[7px] flex border-t border-white min-h-0">
        <div className="w-[97px] border border-[#ddd] bg-[#f8f8f8] flex items-center pl-[5px] text-[#333] [font-family:'Liberation_Sans',sans-serif]">(X: 493 Y: 463)</div>
        <div className="ml-[3px] flex-1 border border-[#ddd] bg-[#f8f8f8] flex items-center pl-[2px] pt-px">选择钢筋进行编辑，选择标注进行修改或移动;</div>
      </div>
    </div>
  </div>
);

const StatusBar = () => (
  <div className="h-[20px] mt-[2px] bg-[#f0f0f0] flex gap-[2px] text-[12px] text-[#111] shrink-0">
    <div className="w-[148px] border border-[#ddd]" />
    <div className="w-[78px] border border-[#ddd] flex items-center pl-px pt-px">层高:<span className={mono}>2.8m</span></div>
    <div className="w-[98px] border border-[#ddd] flex items-center pl-px pt-px">底标高:<span className={mono}>10.27m</span></div>
    <div className="w-[48px] border border-[#ddd] flex items-center pl-px text-[11px] [font-family:'Liberation_Mono',monospace]">0</div>
    <div className="w-[914px] border border-[#ddd] flex items-center pl-px pt-px">名称在当前层当前构件类型下不允许重名</div>
    <div className={`flex-1 border border-[#999] flex items-center pl-px ${mono}`}>1074.8 FPS</div>
  </div>
);

const TaskApp = ({ children, active, running, className = "" }) => (
  <div className={`w-[49px] h-[40px] flex items-center justify-center relative shrink-0 ${active ? "bg-[#2d3236]" : ""} ${className}`}>
    {children}
    {running && <div className="absolute left-[1px] right-[1px] bottom-0 h-[2px] bg-[#76b9ed]" />}
  </div>
);

const Taskbar = () => (
  <div className="h-[40px] bg-[#0a0e12] flex items-center shrink-0 text-white text-[12px]">
    <div className="w-[48px] h-[40px] bg-black flex items-center justify-center">
      <Svg w={16} h={16}><path d="M0 2.500l6.500-1v6H0zM7.500 1.300L16 0v7.500H7.500zM0 8.500h6.500v6L0 13.500zM7.500 8.500H16V16l-8.500-1.300z" fill="#fff" /></Svg>
    </div>
    <div className="w-[344px] h-[40px] bg-[#333] flex items-center pl-[9px]">
      <Svg w={20} h={20}><circle cx="10" cy="10" r="8" fill="none" stroke="#fff" strokeWidth="2.500" /></Svg>
      <span className="ml-[6px] text-[#8e8e8e] text-[12.500px]">在这里输入你要搜索的内容</span>
      <Svg w={12} h={20} className="ml-auto mr-[15px]"><rect x="3.500" y="1" width="5" height="11" rx="2.500" fill="none" stroke="#888" /><path d="M1 8a5 5 0 0 0 10 0M6 13v4M3 18h6" stroke="#888" fill="none" /></Svg>
    </div>
    <div className="flex ml-[1px]">
      <TaskApp>
        <Svg w={22} h={22}><path d="M11 11C6 10 3 8 4 4c1-3 6-3 7 1zM11 11c5-1 8-3 7-7-1-3-6-3-7 1zM11 11c-5 1-8 3-7 7 1 3 6 3 7-1zM11 11c5 1 8 3 7 7-1 3-6 3-7-1z" fill="#e2e2e2" /></Svg>
      </TaskApp>
      <TaskApp>
        <Svg w={20} h={22}><path d="M16 4C9 0 2 5 2 12c0 5 6 9 12 6 4-3 3-9-2-9-4 0-5 5-2 6" stroke="#ddd" strokeWidth="1.500" fill="none" /></Svg>
      </TaskApp>
      <TaskApp className="ml-[5px]">
        <Svg w={20} h={22}><path d="M1 12C1 5 5 1 10 1c6 0 9 4 9 11H7c0 5 7 6 11 3v4c-6 3-17 3-17-7zM7 9h6c0-4-6-4-6 0z" fill="#0a78d7" /></Svg>
      </TaskApp>
      <TaskApp>
        <Svg w={20} h={22}><path d="M2 6h16v16H2z" fill="#f2f2f2" /><path d="M6 6c0-7 8-7 8 0" fill="none" stroke="#f2f2f2" /><path d="M6 10h3.500v3.500H6zM10.500 10H14v3.500h-3.500zM6 14.500h3.500V18H6zM10.500 14.500H14V18h-3.500z" fill="#111" /></Svg>
      </TaskApp>
      <TaskApp>
        <Svg w={22} h={20}><path d="M1 2h7l2 2h11v15H1z" fill="#f3d57a" /><path d="M6 12h10v7H6z" fill="#6cc1f0" /></Svg>
      </TaskApp>
      <TaskApp running>
        <Svg w={22} h={24}><path d="M0 3h22v21H0z" fill="#f08a1e" /><path d="M3 5h16v16H3z" fill="#fbe9b8" /><path d="M7 9l9 8M7 13h5M7 16h4" stroke="#b8621a" strokeWidth="1.500" /></Svg>
      </TaskApp>
      <TaskApp active running>
        <div className="w-[24px] h-[25px] rounded-[5px] bg-[#1a93f0] flex items-center justify-center">
          <Svg w={16} h={18}><path d="M8 1v16M1.500 7c0 5 3 4 6.500 4s6.500 1 6.500-4" stroke="#fff" strokeWidth="2" fill="none" /></Svg>
        </div>
      </TaskApp>
      <TaskApp running>
        <Svg w={24} h={26}><path d="M4 4c8-5 20-3 18 2-2 2-5 1-7 2 3 3 4 8 1 13-4 5-11 4-12-4C3 12 7 8 4 4z" fill="#1a8ff0" /><circle cx="11" cy="14" r="3.500" fill="#0a0e12" /></Svg>
      </TaskApp>
      <TaskApp running>
        <Svg w={22} h={24}><circle cx="11" cy="13" r="10" fill="#eee" /><circle cx="11" cy="13" r="8" fill="#6cc03a" /><path d="M4 13h14M6 17q5 3 11 0M11 6q7 0 6 7" stroke="#fff" strokeWidth="2" fill="none" /></Svg>
      </TaskApp>
    </div>
    <div className="ml-[150px] w-[54px] pt-[3px] flex flex-col items-center leading-[15px] text-[12.500px] shrink-0">
      <span>42%</span>
      <span className="whitespace-nowrap">CPU使用</span>
    </div>
    <Svg w={13} h={7} className="ml-[14px]"><path d="M1 6.500L6.500 1 12 6.500" stroke="#eee" fill="none" /></Svg>
    <Svg w={16} h={14} className="ml-[8px]"><rect x="2" y="5" width="13" height="8" fill="none" stroke="#eee" /><rect x="3" y="6" width="8" height="6" fill="#eee" /><path d="M3 0v3M6 0v3M2 3h5" stroke="#eee" /></Svg>
    <Svg w={14} h={14} className="ml-[11px]"><path d="M1 13a12 12 0 0 1 12-12M4 13a9 9 0 0 1 9-9M7 13a6 6 0 0 1 6-6" stroke="#ddd" fill="none" /><circle cx="12" cy="12" r="1.500" fill="#eee" /></Svg>
    <Svg w={16} h={14} className="ml-[7px]"><path d="M1 5h3l4-4v12L4 9H1z" fill="none" stroke="#eee" /><path d="M10 4q2 3 0 6M13 2q3 5 0 10" stroke="#aaa" fill="none" /></Svg>
    <Svg w={23} h={14} className="ml-[6px]"><rect x=".5" y=".5" width="22" height="13" fill="none" stroke="#eee" /><path d="M3 4h17M3 7h17" stroke="#eee" strokeDasharray="1.500 1" /><path d="M6 10h11" stroke="#eee" /></Svg>
    <span className="ml-[10px] font-bold text-[13px]">英</span>
    <div className="ml-[22px] w-[14px] h-[16px] rounded-[3px] bg-[#ef5a1e] rotate-[-8deg] flex items-center justify-center font-bold text-[12px]">S</div>
    <div className="ml-[7px] w-[62px] flex flex-col items-end leading-[20px] text-[12.500px] shrink-0">
      <span className="mr-[6px]">18:00</span>
      <span>2017/9/13</span>
    </div>
    <div className="relative ml-[18px] w-[18px] h-[16px] bg-white mb-[4px]">
      <div className="mt-[3px] mx-[3px] h-[2px] bg-[#111]" />
      <div className="mt-[2px] mx-[3px] h-[2px] bg-[#111]" />
      <div className="mt-[2px] mx-[3px] w-[7px] h-[2px] bg-[#111]" />
      <div className="absolute left-[7px] top-[7px] w-[17px] h-[17px] rounded-full bg-[#3a3a3a] border border-[#888] flex items-center justify-center text-white text-[11px] font-bold">2</div>
    </div>
  </div>
);

export default function App() {
  return (
    <div className={`w-[1366px] h-[768px] overflow-hidden bg-[#f0f0f0] flex flex-col relative ${sans}`}>
      <TitleBar />
      <MenuBar />
      <SogouBar />
      <MainToolbar />
      <div className="h-[622px] flex shrink-0">
        <NavPanel />
        <div className="flex-1 flex flex-col min-w-0 ml-[4px]">
          <SecondToolbar />
          <div className="h-[594px] flex min-h-0">
            <ComponentTree />
            <PropGrid />
          </div>
        </div>
      </div>
      <StatusBar />
      <Taskbar />
    </div>
  );
}
